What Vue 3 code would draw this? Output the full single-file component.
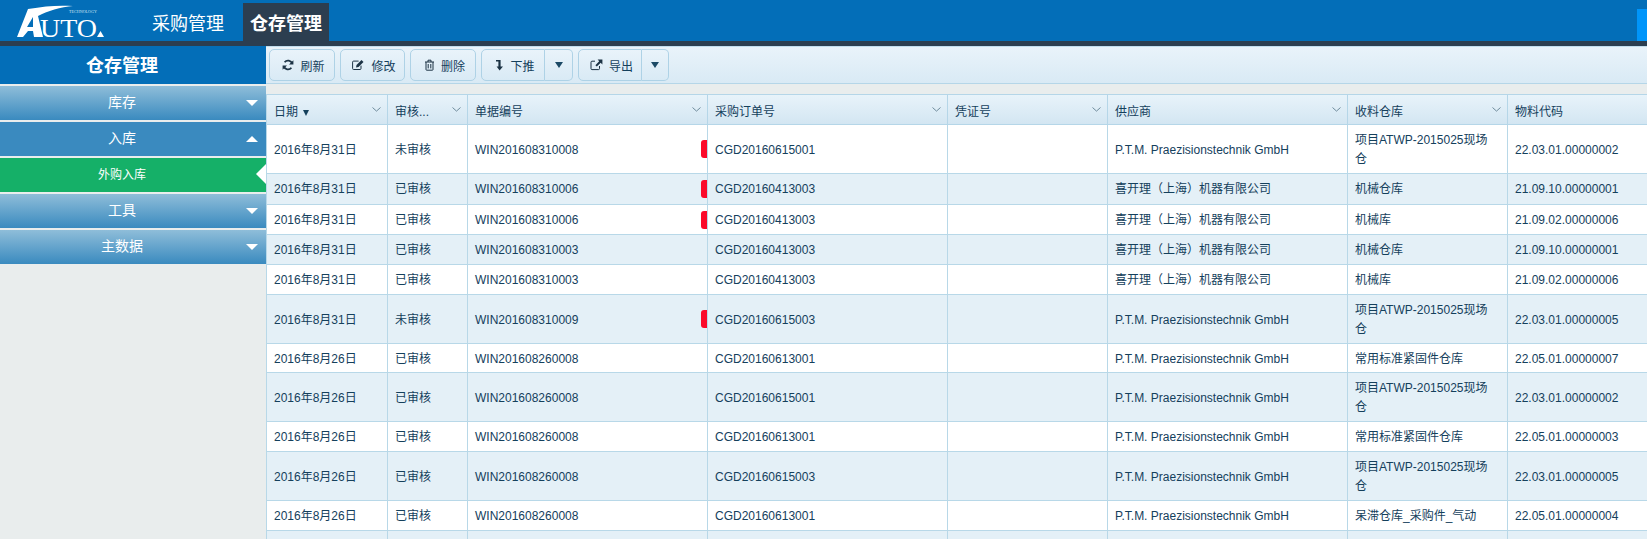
<template>
  <div class="page">
    <header class="topbar">
      <svg class="logo" width="88" height="39" viewBox="0 -2 88 39">
        <path d="M0 33 L6 33 L11 27 L16 27 L17 33 L26 33 L21 12 C30 7 44 3 56 2 C42 1 28 2 11 5 Z" fill="#fff" />
        <path d="M16 23 L16 13 L10 23 Z" fill="#036eb8" />
        <text x="23" y="33" class="logo-word" textLength="57" lengthAdjust="spacingAndGlyphs">UTO</text>
        <path d="M80 33 L83.5 27 L87 33 Z" fill="#fff" />
        <text x="52" y="9" class="logo-tech" textLength="28" lengthAdjust="spacingAndGlyphs">TECHNOLOGY</text>
      </svg>
      <nav class="nav">
        <a v-for="item in navItems" :key="item" class="nav-item" :class="{ active: item === '仓存管理' }">{{ item }}</a>
      </nav>
      <div class="top-right"></div>
    </header>

    <div class="content">
      <aside class="sidebar">
        <div class="side-title">仓存管理</div>
        <div class="side-menu">
          <template v-for="menu in menus" :key="menu.name">
            <div class="menu-head" :class="{ open: menu.open }">
              <span>{{ menu.name }}</span>
              <i class="menu-arrow"></i>
            </div>
            <div v-for="sub in menu.children" :key="sub" class="menu-sub">{{ sub }}</div>
          </template>
        </div>
      </aside>

      <main class="main">
        <div class="toolbar">
          <button class="btn">
            <svg width="12" height="12" viewBox="0 0 12 12"><path d="M10.2 4.6A4.4 4.4 0 0 0 2.6 3.2M1.8 7.4a4.4 4.4 0 0 0 7.6 1.4" fill="none" stroke="#1c3345" stroke-width="1.8" /><path d="M11.4 1.2v4.4H7zM.6 10.8V6.4H5z" fill="#1c3345" /></svg>
            刷新
          </button>
          <button class="btn btn-edit">
            <svg width="13" height="12" viewBox="0 0 13 12"><path d="M9 6.6v2.9a1 1 0 0 1-1 1H1.6a1 1 0 0 1-1-1V3.1a1 1 0 0 1 1-1h5" fill="none" stroke="#1c3345" stroke-width="1" /><path d="M4 8.4l.5-2.4 5-5 2 1.9-5 5z" fill="#1c3345" /></svg>
            修改
          </button>
          <button class="btn">
            <svg width="11" height="12" viewBox="0 0 11 12"><path d="M1 3h9M4 3V1.2h3V3M2 3v7.6a.6.6 0 0 0 .6.6h5.8a.6.6 0 0 0 .6-.6V3M4.2 5v4.4M6.8 5v4.4" fill="none" stroke="#1c3345" stroke-width="1" /></svg>
            删除
          </button>
          <div class="btn-group">
            <button class="btn btn-main">
              <svg width="10" height="12" viewBox="-2 0 10 12"><path d="M0 1h4.6v6.4H7L3.6 11.6 .6 7.4h1.8V2.4H0z" fill="#1c3345" /></svg>
              下推
            </button>
            <button class="btn btn-caret"><i class="caret"></i></button>
          </div>
          <div class="btn-group">
            <button class="btn btn-main">
              <svg width="13" height="12" viewBox="0 0 13 12"><path d="M9.5 7v2.6a1 1 0 0 1-1 1H2a1 1 0 0 1-1-1V3.2a1 1 0 0 1 1-1h3" fill="none" stroke="#1c3345" stroke-width="1" /><path d="M7.6.6h4.8v4.8L10.7 3.8 6.8 7.6 5.4 6.2l3.8-3.9z" fill="#1c3345" /></svg>
              导出
            </button>
            <button class="btn btn-caret btn-caret-narrow"><i class="caret"></i></button>
          </div>
        </div>

        <div class="table-wrap">
          <table class="grid">
            <colgroup>
              <col v-for="col in columns" :key="col.label" :style="{ width: col.width + 'px' }" />
            </colgroup>
            <thead>
              <tr>
                <th v-for="col in columns" :key="col.label">
                  {{ col.label }}<i v-if="col.sorted" class="sort-mark"></i>
                  <svg v-if="col.menu" class="chevron" width="9" height="5" viewBox="0 0 9 5"><path d="M.5.5l4 3.6 4-3.6" fill="none" stroke="#6f8b9c" stroke-width="1" /></svg>
                </th>
              </tr>
            </thead>
            <tbody>
              <tr v-for="(row, i) in rows" :key="i">
                <td>{{ row.date }}</td>
                <td>{{ row.status }}</td>
                <td class="flag-cell">
                  {{ row.bill }}
                  <i v-if="row.flag" class="flag"></i>
                </td>
                <td>{{ row.order }}</td>
                <td></td>
                <td>{{ row.vendor }}</td>
                <td>{{ row.store }}</td>
                <td>{{ row.code }}</td>
              </tr>
            </tbody>
          </table>
        </div>
      </main>
    </div>
  </div>
</template>

<script setup>
const navItems = ['采购管理', '仓存管理']

const menus = [
  { name: '库存' },
  { name: '入库', open: true, children: ['外购入库'] },
  { name: '工具' },
  { name: '主数据' }
]

const columns = [
  { label: '日期', width: 122, menu: true, sorted: true },
  { label: '审核...', width: 80, menu: true },
  { label: '单据编号', width: 240, menu: true },
  { label: '采购订单号', width: 240, menu: true },
  { label: '凭证号', width: 160, menu: true },
  { label: '供应商', width: 240, menu: true },
  { label: '收料仓库', width: 160, menu: true },
  { label: '物料代码', width: 160 }
]

const PTM = 'P.T.M. Praezisionstechnik GmbH'
const CKD = '喜开理（上海）机器有限公司'
const PROJECT = '项目ATWP-2015025现场仓'
const FASTENER = '常用标准紧固件仓库'

const rows = [
  { date: '2016年8月31日', status: '未审核', bill: 'WIN201608310008', flag: true, order: 'CGD20160615001', vendor: PTM, store: PROJECT, code: '22.03.01.00000002' },
  { date: '2016年8月31日', status: '已审核', bill: 'WIN201608310006', flag: true, order: 'CGD20160413003', vendor: CKD, store: '机械仓库', code: '21.09.10.00000001' },
  { date: '2016年8月31日', status: '已审核', bill: 'WIN201608310006', flag: true, order: 'CGD20160413003', vendor: CKD, store: '机械库', code: '21.09.02.00000006' },
  { date: '2016年8月31日', status: '已审核', bill: 'WIN201608310003', order: 'CGD20160413003', vendor: CKD, store: '机械仓库', code: '21.09.10.00000001' },
  { date: '2016年8月31日', status: '已审核', bill: 'WIN201608310003', order: 'CGD20160413003', vendor: CKD, store: '机械库', code: '21.09.02.00000006' },
  { date: '2016年8月31日', status: '未审核', bill: 'WIN201608310009', flag: true, order: 'CGD20160615003', vendor: PTM, store: PROJECT, code: '22.03.01.00000005' },
  { date: '2016年8月26日', status: '已审核', bill: 'WIN201608260008', order: 'CGD20160613001', vendor: PTM, store: FASTENER, code: '22.05.01.00000007' },
  { date: '2016年8月26日', status: '已审核', bill: 'WIN201608260008', order: 'CGD20160615001', vendor: PTM, store: PROJECT, code: '22.03.01.00000002' },
  { date: '2016年8月26日', status: '已审核', bill: 'WIN201608260008', order: 'CGD20160613001', vendor: PTM, store: FASTENER, code: '22.05.01.00000003' },
  { date: '2016年8月26日', status: '已审核', bill: 'WIN201608260008', order: 'CGD20160615003', vendor: PTM, store: PROJECT, code: '22.03.01.00000005' },
  { date: '2016年8月26日', status: '已审核', bill: 'WIN201608260008', order: 'CGD20160613001', vendor: PTM, store: '呆滞仓库_采购件_气动', code: '22.05.01.00000004' },
  { date: '', status: '', bill: '', order: '', vendor: '', store: '', code: '' }
]
</script>

<style>
html,
body {
  margin: 0;
  overflow: hidden;
}
</style>

<style scoped>
.page {
  display: flex;
  flex-direction: column;
  height: 539px;
  overflow: hidden;
  background: #e9eded;
  color: #14405c;
  font-family: "Liberation Sans", "Noto Sans CJK SC", sans-serif;
  font-size: 12px;
}

.topbar {
  display: flex;
  align-items: flex-end;
  height: 41px;
  flex: none;
  position: relative;
  background: #036eb8;
  border-bottom: 5px solid #2c3e50;
}

.logo {
  margin-left: 17px;
  flex: none;
  overflow: visible;
}

.logo-word {
  font-family: "Liberation Serif", serif;
  font-size: 26px;
  fill: #fff;
}

.logo-tech {
  font-family: "Liberation Serif", serif;
  font-size: 4px;
  fill: #cfe3f2;
}

.nav {
  display: flex;
  gap: 12px;
  margin-left: 40px;
}

.nav-item {
  display: block;
  height: 38px;
  padding: 0 7px;
  font-size: 18px;
  line-height: 42px;
  color: #fff;
}

.nav-item.active {
  background: #2c3e50;
  font-weight: 700;
}

.top-right {
  margin-left: auto;
  width: 10px;
  height: 32px;
  background: #0095fa;
}

.content {
  display: flex;
  flex: 1;
  min-height: 0;
}

.sidebar {
  width: 266px;
  flex: none;
}

.side-title {
  height: 38px;
  padding-right: 22px;
  background: #036eb8;
  color: #fff;
  font-size: 18px;
  font-weight: 700;
  line-height: 41px;
  text-align: center;
}

.side-menu {
  display: flex;
  flex-direction: column;
  gap: 2px;
  padding-top: 2px;
}

.menu-head {
  position: relative;
  height: 34px;
  background: linear-gradient(#8fbdd9, #3a8abf);
  color: #fff;
  font-size: 14px;
  line-height: 33px;
  text-align: center;
  padding-right: 22px;
  box-sizing: border-box;
}

.menu-head.open {
  background: #3a8abf;
}

.menu-arrow {
  position: absolute;
  right: 8px;
  top: 14px;
  border-left: 6px solid transparent;
  border-right: 6px solid transparent;
  border-top: 6px solid #fff;
}

.menu-head.open .menu-arrow {
  border-top: 0;
  border-bottom: 6px solid #fff;
}

.menu-sub {
  position: relative;
  height: 34px;
  background: #15b068;
  color: #fff;
  line-height: 34px;
  text-align: center;
  padding-right: 22px;
  box-sizing: border-box;
}

.menu-sub::after {
  content: "";
  position: absolute;
  right: 0;
  top: 6px;
  border-top: 10px solid transparent;
  border-bottom: 10px solid transparent;
  border-right: 10px solid #fff;
}

.main {
  flex: 1;
  min-width: 0;
  display: flex;
  flex-direction: column;
}

.toolbar {
  display: flex;
  align-items: center;
  gap: 5px;
  height: 38px;
  flex: none;
  padding: 0 3px;
  box-sizing: border-box;
  background: linear-gradient(#e9f3fa, #d9eaf5);
  border-top: 1px solid #c2dded;
  border-bottom: 1px solid #b5d6e8;
}

.btn {
  display: flex;
  align-items: center;
  justify-content: center;
  gap: 6px;
  width: 66px;
  height: 32px;
  padding: 0 0 0 3px;
  border: 1px solid #aed2e6;
  border-radius: 5px;
  background: linear-gradient(#e9f3fa, #d9eaf5);
  color: #14405c;
  font: inherit;
}

.btn-edit {
  width: 65px;
}

.btn-group {
  display: flex;
}

.btn-main {
  width: 64px;
  border-radius: 5px 0 0 5px;
}

.btn-caret {
  width: 28px;
  padding: 0;
  border-left: 0;
  border-radius: 0 5px 5px 0;
}

.btn-caret-narrow {
  width: 27px;
}

.caret {
  border-left: 4px solid transparent;
  border-right: 4px solid transparent;
  border-top: 6px solid #1c4a66;
}

.table-wrap {
  flex: 1;
  min-height: 0;
  margin-top: 10px;
  overflow: hidden;
}

.grid {
  table-layout: fixed;
  width: 1402px;
  border-collapse: separate;
  border-spacing: 0;
  background: #fff;
}

.grid th {
  position: relative;
  height: 31px;
  padding: 2px 7px 0;
  box-sizing: border-box;
  background: linear-gradient(#e8f3fa, #d3e6f2);
  border-top: 1px solid #b5d6e8;
  border-right: 1px solid #b5d6e8;
  border-bottom: 1px solid #b5d6e8;
  font-weight: 400;
  text-align: left;
  white-space: nowrap;
}

.grid th:first-child,
.grid td:first-child {
  border-left: 1px solid #b8d8e8;
}

.sort-mark {
  display: inline-block;
  margin-left: 5px;
  border-left: 3.5px solid transparent;
  border-right: 3.5px solid transparent;
  border-top: 6px solid #14405c;
}

.chevron {
  position: absolute;
  right: 6px;
  top: 12px;
}

.grid td {
  padding: 6px 8px 4px 7px;
  line-height: 19px;
  border-right: 1px solid #b8d8e8;
  border-bottom: 1px solid #b8d8e8;
  vertical-align: middle;
}

/* row heights in the source grid are not quite even */
.grid tbody tr:nth-child(2) td {
  padding-bottom: 5px;
}

.grid tbody tr:nth-child(7) td {
  padding-bottom: 3px;
}

.grid tbody tr:nth-child(even) td {
  background: #e4f0f7;
}

.flag-cell {
  position: relative;
}

.flag {
  position: absolute;
  right: 0;
  top: 50%;
  width: 6px;
  height: 18px;
  margin-top: -9px;
  background: #fb0a2a;
  border-radius: 3px 0 0 3px;
}
</style>
